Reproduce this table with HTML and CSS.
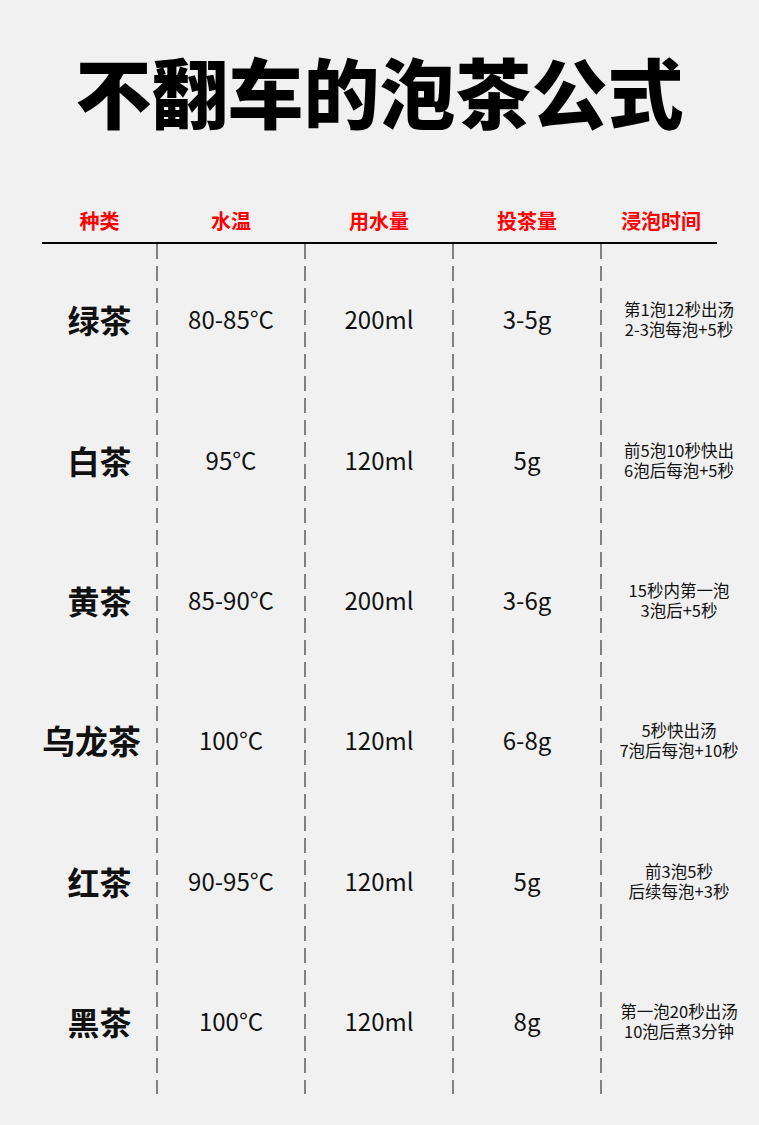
FILE: index.html
```html
<!DOCTYPE html>
<html lang="zh-CN">
<head>
<meta charset="utf-8">
<title>不翻车的泡茶公式</title>
<link rel="stylesheet" href="styles.css">
</head>
<body>
<div class="page">
  <h1 class="title">不翻车的泡茶公式</h1>
  <div class="table">
    <div class="head">
      <div class="hcell">种类</div>
      <div class="hcell">水温</div>
      <div class="hcell">用水量</div>
      <div class="hcell">投茶量</div>
      <div class="hcell hcell-last">浸泡时间</div>
    </div>
    <div class="body">
      <div class="row">
        <div class="name">绿茶</div>
        <div class="val">80-85°C</div>
        <div class="val">200ml</div>
        <div class="val">3-5g</div>
        <div class="note"><div>第1泡12秒出汤</div><div>2-3泡每泡+5秒</div></div>
      </div>
      <div class="row">
        <div class="name">白茶</div>
        <div class="val">95°C</div>
        <div class="val">120ml</div>
        <div class="val">5g</div>
        <div class="note"><div>前5泡10秒快出</div><div>6泡后每泡+5秒</div></div>
      </div>
      <div class="row">
        <div class="name">黄茶</div>
        <div class="val">85-90°C</div>
        <div class="val">200ml</div>
        <div class="val">3-6g</div>
        <div class="note"><div>15秒内第一泡</div><div>3泡后+5秒</div></div>
      </div>
      <div class="row">
        <div class="name name-long">乌龙茶</div>
        <div class="val">100°C</div>
        <div class="val">120ml</div>
        <div class="val">6-8g</div>
        <div class="note"><div>5秒快出汤</div><div>7泡后每泡+10秒</div></div>
      </div>
      <div class="row">
        <div class="name">红茶</div>
        <div class="val">90-95°C</div>
        <div class="val">120ml</div>
        <div class="val">5g</div>
        <div class="note"><div>前3泡5秒</div><div>后续每泡+3秒</div></div>
      </div>
      <div class="row">
        <div class="name">黑茶</div>
        <div class="val">100°C</div>
        <div class="val">120ml</div>
        <div class="val">8g</div>
        <div class="note"><div>第一泡20秒出汤</div><div>10泡后煮3分钟</div></div>
      </div>
    </div>
  </div>
</div>
</body>
</html>
```
FILE: styles.css
```css
* { box-sizing: border-box; }
html, body {
  margin: 0;
  padding: 0;
  background: #f1f1f1;
}
body {
  font-family: "Noto Sans CJK SC", "Noto Sans", sans-serif;
  color: #111;
  width: 759px;
  height: 1125px;
  overflow: hidden;
}
.page {
  padding-top: 52px;
}
.title {
  margin: 0;
  font-size: 76px;
  line-height: 76px;
  font-weight: 900;
  text-align: center;
  color: #000;
  letter-spacing: 0;
}
.table {
  margin-top: 79px;
  margin-left: 42px;
}
.head {
  display: grid;
  grid-template-columns: 115px 148px 148px 148px 116px;
  width: 675px;
  border-bottom: 2px solid #000;
  padding-bottom: 7px;
}
.hcell {
  text-align: center;
  color: #ff0000;
  font-size: 20px;
  line-height: 28px;
  font-weight: 700;
}
.hcell-last {
  padding-left: 4px;
}
.body {
  padding-top: 5px;
  height: 850px;
  background-image:
    linear-gradient(#808080 15px, transparent 15px),
    linear-gradient(#808080 15px, transparent 15px),
    linear-gradient(#808080 15px, transparent 15px),
    linear-gradient(#808080 15px, transparent 15px);
  background-size: 2px 22px;
  background-repeat: repeat-y;
  background-position: 114px 0, 262px 0, 410px 0, 558px 0;
}
.row {
  display: grid;
  grid-template-columns: 115px 148px 148px 148px 156px;
  height: 140.4px;
  align-items: center;
}
.name {
  text-align: center;
  font-size: 32px;
  font-weight: 700;
  line-height: 40px;
  color: #111;
}
.name-long {
  font-size: 33px;
  margin-right: 16px;
}
.val {
  text-align: center;
  font-size: 24px;
  line-height: 32px;
  color: #111;
}
.note {
  display: flex;
  flex-direction: column;
  align-items: center;
  font-size: 16.5px;
  line-height: 20px;
  color: #111;
}
```
